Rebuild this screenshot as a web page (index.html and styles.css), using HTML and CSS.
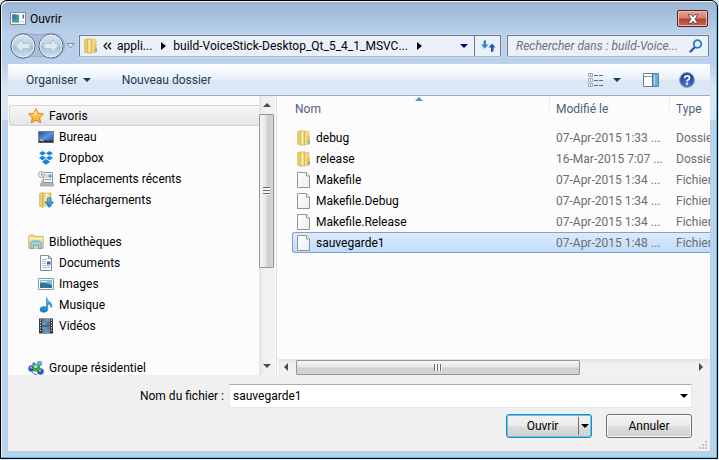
FILE: index.html
```html
<!DOCTYPE html>
<html lang="fr">
<head>
<meta charset="utf-8">
<title>Ouvrir</title>
<link rel="stylesheet" href="styles.css">
</head>
<body>
<svg class="defs" aria-hidden="true">
  <defs>
    <linearGradient id="gFolder" x1="0" x2="1"><stop offset="0" stop-color="#e8cf6e"/><stop offset=".5" stop-color="#fbf0b4"/><stop offset="1" stop-color="#dcb84a"/></linearGradient>
    <linearGradient id="gPage" x1="0" y1="0" x2="1" y2="1"><stop offset="0" stop-color="#fff"/><stop offset="1" stop-color="#ececec"/></linearGradient>
    <linearGradient id="gStar" x1="0" y1="0" x2="0" y2="1"><stop offset="0" stop-color="#ffe27a"/><stop offset="1" stop-color="#f9a51c"/></linearGradient>
    <linearGradient id="gScreen" x1="0" y1="0" x2="1" y2="1"><stop offset="0" stop-color="#1c4fa8"/><stop offset=".5" stop-color="#5c94e0"/><stop offset="1" stop-color="#1d4a9c"/></linearGradient>
    <linearGradient id="gBlue" x1="0" y1="0" x2="0" y2="1"><stop offset="0" stop-color="#5cc4f4"/><stop offset="1" stop-color="#1a78c8"/></linearGradient>
    <linearGradient id="gOrb" x1="0" y1="0" x2="0" y2="1"><stop offset="0" stop-color="#dbe6f2"/><stop offset=".48" stop-color="#bccde0"/><stop offset=".52" stop-color="#a5bad2"/><stop offset="1" stop-color="#d3e4f4"/></linearGradient>
    <radialGradient id="gHelp" cx=".5" cy=".75" r=".7"><stop offset="0" stop-color="#4d82e0"/><stop offset="1" stop-color="#16309a"/></radialGradient>
    <symbol id="folder" viewBox="0 0 16 16"><path d="M1.500 1.500 6 .6V15.500L1.500 14.200Z" fill="#e6cb66" stroke="#d0b24c" stroke-width=".5"/><path d="M6.500 1.500h6.500v13H6.500z" fill="#f0da83" stroke="#d2b44e" stroke-width=".5"/><path d="M4.500 1.800 8.500.5v15l-4-1.200z" fill="url(#gFolder)" stroke="#cdae45" stroke-width=".5"/><path d="M11 6h2.500v8H11z" fill="#e3c35a"/><path d="M12.300 10.500h1.400v3h-1.400z" fill="#49a8e8"/></symbol>
    <symbol id="page" viewBox="0 0 16 16"><path d="M1.500.5h9l3 3.500v11.500h-12z" fill="url(#gPage)" stroke="#949494"/><path d="M10.500.5V4h3" fill="#fff" stroke="#949494"/></symbol>
    <symbol id="star" viewBox="0 0 16 16"><path d="m8 .7 2.200 4.700 5.200.6-3.800 3.600 1 5.200L8 12.200l-4.600 2.600 1-5.200L.6 6l5.200-.6z" fill="url(#gStar)" stroke="#df7f1c"/><path d="m8 2.500 1.200 4H5L8 2.500z" fill="#fff3b5" opacity=".7"/></symbol>
    <symbol id="desk" viewBox="0 0 16 16"><path d="M.5 2.500h15v11H.5z" fill="url(#gScreen)" stroke="#6f7f95"/><path d="M1 11.500h14V13.500H1z" fill="#243145"/><path d="M2 10h2v2H2z" fill="#f3a53a"/><path d="M4 10.500h1.500v2H4z" fill="#7bcb49"/></symbol>
    <symbol id="dropbox" viewBox="0 0 16 16"><path d="M4.500 1 8 3.200 4.500 5.500 1 3.200zM11.500 1 15 3.200 11.500 5.500 8 3.200zM4.500 5.700 8 8l-3.500 2.200L1 8zM11.500 5.700 15 8l-3.500 2.200L8 8zM8 9l3.500 2.200v1.300L8 14.800l-3.500-2.300v-1.300z" fill="#1583e4"/></symbol>
    <symbol id="recent" viewBox="0 0 16 16"><path d="M5.500 1.500h9v10h-9z" fill="#f8fbfd" stroke="#8f99a1"/><path d="M7 4h3M7 6h3" stroke="#b3bdc6"/><path d="M10.500 3.500h3v3h-3z" fill="#4b96d2"/><path d="M7 8.500h6" stroke="#6fa5a1"/><path d="M3 11.500h12l.5 3.500H2z" fill="#b6babd" stroke="#85898c" stroke-width=".6"/><circle cx="3.500" cy="3.500" r="3" fill="#f4f6f7" stroke="#969b9f"/><path d="M3.500 2v2h1.500" fill="none" stroke="#666" stroke-width=".8"/><path d="M3 8.500h2v3H3z" fill="#c9cdd0"/></symbol>
    <symbol id="download" viewBox="0 0 16 16"><path d="M1.500 1.500 5 .5v15l-3.500-1.200z" fill="#e6cd70" stroke="#c9ad4c" stroke-width=".6"/><path d="M5 1h8v13H5z" fill="url(#gFolder)" stroke="#c9aa43" stroke-width=".6"/><path d="M9.500 6h3.500v4h2.500l-4.200 5.500L7 10h2.500z" fill="url(#gBlue)" stroke="#1568ac" stroke-width=".7"/></symbol>
    <symbol id="library" viewBox="0 0 16 16"><path d="M.7 2.500 2 1h4l1 1.500h8.300v11.800H.7z" fill="#f3dc85" stroke="#c9a94a" stroke-width=".8"/><path d="M1 4.500h14" stroke="#fff6cc" stroke-width="1.500"/><path d="M2.700 14.700V10q0-3 3-3h4.600q3 0 3 3v4.700h-2.600v-3.500H5.300v3.500z" fill="#9bd4ee" stroke="#4a9fc9" stroke-width=".8"/></symbol>
    <symbol id="doc" viewBox="0 0 16 16"><path d="M2.500.5h8l3 3v12h-11z" fill="#fff" stroke="#858b93"/><path d="M10.500.5v3h3" fill="none" stroke="#858b93"/><path d="M4 4.500h5M4 6.500h4M4 8.500h4M4 10.500h8M4 12.500h8" stroke="#b5bcd6"/><path d="M9 6.500h3.500v3H9z" fill="#2c66b5"/></symbol>
    <symbol id="image" viewBox="0 0 16 16"><path d="M.5 2.500h15v11H.5z" fill="#fff" stroke="#8d9399"/><path d="M2 4h12v8H2z" fill="#7bc0eb"/><path d="M2 7q5-1 12 2v1H2z" fill="#2f8062"/><path d="M2 9.500h12V12H2z" fill="#2b6fb8"/><path d="M3 5.500h6" stroke="#e5f5fe"/></symbol>
    <symbol id="music" viewBox="0 0 16 16"><path d="M8.500.7q.5 2.300 3 4 3.500 2.300 1.700 6-.3-3.200-3.500-4v5.600q0 3-4 3-3.700 0-3.700-2.700 0-2.800 3.700-3 1.500 0 2.800.5z" fill="url(#gBlue)" stroke="#2681bd" stroke-width=".7"/></symbol>
    <symbol id="video" viewBox="0 0 16 16"><path d="M1 .5h14v15H1z" fill="#303740"/><path d="M4 1h8v6.500H4zM4 8.500h8V15H4z" fill="#4a9bd6"/><path d="M4 1h4l-4 4zM9 3l3 1v3H8zM4 10l3 3-3 2zM8 9l4 1-2 3z" fill="#a85b49"/><path d="M2.500 1.500v13M13.500 1.500v13" stroke="#d9e8e6" stroke-width="1.200" stroke-dasharray="1.200 1.400"/></symbol>
    <symbol id="group" viewBox="0 0 16 16"><circle cx="11.500" cy="3.500" r="2.800" fill="#6ba9e4"/><circle cx="3.500" cy="8.500" r="3.200" fill="#3158c4"/><circle cx="12.500" cy="11.500" r="3.300" fill="#3459be"/><circle cx="6" cy="4" r="1.800" fill="#4a80d2"/><circle cx="8.500" cy="8" r="3.800" fill="#3aa63c"/><circle cx="7.700" cy="6.500" r="1.600" fill="#b8ecb0"/><circle cx="2.800" cy="7.500" r="1" fill="#a9c4f5"/><circle cx="12" cy="10.500" r="1" fill="#b4c9f4"/><path d="M4 12q2 3 5 2.500" stroke="#4c6cb8" fill="none"/></symbol>
  </defs>
</svg>

<main class="window">
  <header class="titlebar">
    <svg class="app" viewBox="0 0 16 14" aria-hidden="true"><path d="M.5.5h15v12H.5z" fill="#f7f9fa" stroke="#7f8a94"/><path d="M2 2.500h7v8H2z" fill="#459a91"/><path d="M2 2.500h4v5H2z" fill="#4979ae"/><path d="M10 9.500h1.500M12.500 9.500H14" stroke="#b7c2c9"/><path d="M12.500 2.500h1.500v4h-1.500z" fill="#3978b8"/></svg>
    <h1>Ouvrir</h1>
    <button class="close" aria-label="Fermer"><svg viewBox="0 0 12 10"><path d="M1 .7h3.200L6 2.800 7.800.7H11L8 5l3 4.300H7.800L6 7.200 4.200 9.300H1L4 5z" fill="#fff" stroke="#5b4a55"/></svg></button>
  </header>

  <nav class="navbar" aria-label="Adresse">
    <div class="history">
      <svg class="orbs" viewBox="0 0 57 28" aria-hidden="true"><path d="M14 1.500Q28.500 4 43 1.500a12.500 12.500 0 0 1 0 25Q28.500 22 14 26.500a12.500 12.500 0 0 1 0-25z" fill="#a9bfd9" stroke="#94abc7"/></svg>
      <button aria-label="Précédent"><svg viewBox="0 0 26 26"><circle cx="13" cy="13" r="12" fill="url(#gOrb)" stroke="#596b82"/><circle cx="13" cy="13" r="11" fill="none" stroke="#e7f0f8"/><path d="m5.500 13 7-6.500v4H20v5h-7.500v4z" fill="#dfeaf5" stroke="#b5c8dc"/></svg></button>
      <button aria-label="Suivant"><svg viewBox="0 0 26 26"><circle cx="13" cy="13" r="12" fill="url(#gOrb)" stroke="#596b82"/><circle cx="13" cy="13" r="11" fill="none" stroke="#e7f0f8"/><path d="m20.500 13-7-6.500v4H6v5h7.500v4z" fill="#dfeaf5" stroke="#b5c8dc"/></svg></button>
      <button aria-label="Pages récentes"><svg class="recentpages" viewBox="0 0 9 6"><path d="M.8.5h7.400L4.500 5z" fill="#dce8f4" stroke="#7e94ad"/></svg></button>
    </div>
    <div class="address">
      <svg class="icon" aria-hidden="true"><use href="#folder"/></svg>
      <button class="more" aria-label="Dossiers parents"><svg viewBox="0 0 9 8"><path d="M4 .8 1 4l3 3.200M8 .8 5 4l3 3.200" fill="none" stroke="#111" stroke-width="1.300"/></svg></button>
      <button>appli...</button>
      <svg class="arrow-r" viewBox="0 0 5 8" aria-hidden="true"><path d="m0 0 5 4-5 4z"/></svg>
      <button>build-VoiceStick-Desktop_Qt_5_4_1_MSVC...</button>
      <svg class="arrow-r" viewBox="0 0 5 8" aria-hidden="true"><path d="m0 0 5 4-5 4z"/></svg>
      <button class="drop" aria-label="Emplacements précédents"><svg class="arrow-d navy" viewBox="0 0 8 4"><path d="M0 0h8L4 4z"/></svg></button>
      <button class="refresh" aria-label="Actualiser"><svg viewBox="0 0 16 14"><path d="M6 .8 3.500 2v3.500H1l3.800 4.300L8.500 5.500H6z" fill="#3688ca"/><path d="M11 13.500 13.500 12V8.500H15.500L12 4.500 8.500 8.500H11z" fill="#24589f"/></svg></button>
    </div>
    <div class="search">
      <input type="text" aria-label="Rechercher" placeholder="Rechercher dans : build-Voice...">
      <svg viewBox="0 0 14 14" aria-hidden="true"><path d="M6 8 1.500 12.500" stroke="#2e5c9c" stroke-width="2.400" stroke-linecap="round"/><circle cx="8.500" cy="5" r="3.800" fill="#e7f3fc" stroke="#2c74be" stroke-width="1.800"/></svg>
    </div>
  </nav>

  <div class="toolbar">
    <button class="tool">Organiser <svg class="arrow-d" viewBox="0 0 8 4"><path d="M0 0h8L4 4z"/></svg></button>
    <button class="tool">Nouveau dossier</button>
    <button class="view" aria-label="Affichage"><svg viewBox="0 0 16 14"><path d="M.5.500h4v3h-4zM.5 5.500h4v3h-4zM.5 10.500h4v3h-4z" fill="#fff" stroke="#8c98a8" stroke-width=".8"/><path d="M2 1.500h1v1H2zM2 11.500h1v1H2z" fill="#2b58a8"/><path d="M2 6.500h1v1H2z" fill="#d33c2c"/><path d="M6 2.500h4M11 2.500h4M6 7.500h4M11 7.500h4M6 12.500h4M11 12.500h4" stroke="#5c6d85"/></svg></button>
    <button class="viewdrop" aria-label="Autres options"><svg class="arrow-d" viewBox="0 0 8 4"><path d="M0 0h8L4 4z"/></svg></button>
    <button class="preview" aria-label="Volet de visualisation"><svg viewBox="0 0 16 14"><path d="M.5.5h15v13H.5z" fill="#fff" stroke="#6b7f99"/><path d="M1 3.500h9" stroke="#8496ae"/><path d="M10 1h5v12h-5z" fill="#5cb4d6"/><path d="M9.500 1v12" stroke="#4a6c8c"/><path d="M11.500 2v10" stroke="#c2e8f4"/></svg></button>
    <button class="help" aria-label="Aide"><svg viewBox="0 0 16 16"><circle cx="8" cy="8" r="7.300" fill="url(#gHelp)" stroke="#8993a8" stroke-width="1.200"/><path d="M5.600 6.200Q5.700 3.800 8.100 3.800q2.400 0 2.400 2Q10.500 7 9.200 7.700 8.100 8.400 8.100 9.500" fill="none" stroke="#fff" stroke-width="1.700"/><circle cx="8.100" cy="11.800" r="1.100" fill="#fff"/></svg></button>
  </div>

  <section class="content">
    <div class="tree">
      <ul>
        <li class="root selected"><a href="#"><svg class="icon"><use href="#star"/></svg>Favoris</a></li>
        <li><a href="#"><svg class="icon"><use href="#desk"/></svg>Bureau</a></li>
        <li><a href="#"><svg class="icon"><use href="#dropbox"/></svg>Dropbox</a></li>
        <li><a href="#"><svg class="icon"><use href="#recent"/></svg>Emplacements récents</a></li>
        <li><a href="#"><svg class="icon"><use href="#download"/></svg>Téléchargements</a></li>
      </ul>
      <ul>
        <li class="root"><a href="#"><svg class="icon"><use href="#library"/></svg>Bibliothèques</a></li>
        <li><a href="#"><svg class="icon"><use href="#doc"/></svg>Documents</a></li>
        <li><a href="#"><svg class="icon"><use href="#image"/></svg>Images</a></li>
        <li><a href="#"><svg class="icon"><use href="#music"/></svg>Musique</a></li>
        <li><a href="#"><svg class="icon"><use href="#video"/></svg>Vidéos</a></li>
      </ul>
      <ul>
        <li class="root"><a href="#"><svg class="icon"><use href="#group"/></svg>Groupe résidentiel</a></li>
      </ul>
    </div>
    <div class="vscroll" aria-hidden="true">
      <svg class="tip" viewBox="0 0 8 4"><path d="M0 4h8L4 0z"/></svg>
      <div class="vtrack"><div class="vthumb"><i></i></div></div>
      <svg class="tip" viewBox="0 0 8 4"><path d="M0 0h8L4 4z"/></svg>
    </div>
    <div class="files">
      <div class="listing">
        <table>
          <colgroup><col class="c-name"><col class="c-date"><col class="c-type"></colgroup>
          <thead><tr><th>Nom<svg class="sort" viewBox="0 0 8 4" aria-hidden="true"><path d="M0 4h8L4 0z"/></svg></th><th>Modifié le</th><th>Type</th></tr></thead>
          <tbody>
            <tr><td><svg class="icon"><use href="#folder"/></svg>debug</td><td>07-Apr-2015 1:33 ...</td><td>Dossier</td></tr>
            <tr><td><svg class="icon"><use href="#folder"/></svg>release</td><td>16-Mar-2015 7:07 ...</td><td>Dossier</td></tr>
            <tr><td><svg class="icon"><use href="#page"/></svg>Makefile</td><td>07-Apr-2015 1:34 ...</td><td>Fichier</td></tr>
            <tr><td><svg class="icon"><use href="#page"/></svg>Makefile.Debug</td><td>07-Apr-2015 1:34 ...</td><td>Fichier</td></tr>
            <tr><td><svg class="icon"><use href="#page"/></svg>Makefile.Release</td><td>07-Apr-2015 1:34 ...</td><td>Fichier</td></tr>
            <tr class="active"><td><svg class="icon"><use href="#page"/></svg>sauvegarde1</td><td>07-Apr-2015 1:48 ...</td><td>Fichier</td></tr>
          </tbody>
        </table>
      </div>
      <div class="hscroll" aria-hidden="true">
        <svg class="side" viewBox="0 0 4 8"><path d="M4 0v8L0 4z"/></svg>
        <div class="htrack"><div class="hthumb"><i></i></div></div>
        <svg class="side" viewBox="0 0 4 8"><path d="M0 0v8l4-4z"/></svg>
      </div>
    </div>
  </section>

  <footer class="footer">
    <div class="filename">
      <label for="file">Nom du fichier :</label>
      <div class="combo">
        <input id="file" type="text" value="sauvegarde1">
        <button aria-label="Fichiers récents"><svg class="arrow-d" viewBox="0 0 8 4"><path d="M0 0h8L4 4z"/></svg></button>
      </div>
    </div>
    <div class="actions">
      <div class="split">
        <button>Ouvrir</button>
        <button class="splitdrop" aria-label="Options d'ouverture"><svg class="arrow-d" viewBox="0 0 8 4"><path d="M0 0h8L4 4z"/></svg></button>
      </div>
      <button class="cancel">Annuler</button>
    </div>
    <svg class="grip" viewBox="0 0 8 8" aria-hidden="true"><path d="M6 0h2v2H6zM3 3h2v2H3zM6 3h2v2H6zM0 6h2v2H0zM3 6h2v2H3zM6 6h2v2H6z" fill="#c2c2c2"/></svg>
  </footer>
</main>
</body>
</html>
```
FILE: styles.css
```css
* { box-sizing: border-box; }

body {
  margin: 0;
  height: 100vh;
  padding: 0 1px 1px 0;
  background: #dfe6ef;
  font: 12px/16px Roboto, "Open Sans", sans-serif;
  color: #000;
}

button, input { font: inherit; color: inherit; }
button { margin: 0; padding: 0; border: 0; background: none; white-space: nowrap; }
svg { display: block; flex: none; }
ul { margin: 0; padding: 0; list-style: none; }
.defs { position: absolute; width: 0; height: 0; }
.icon { width: 16px; height: 16px; }
.arrow-d { width: 8px; height: 4px; fill: currentColor; }
.arrow-r { width: 5px; height: 8px; }

.window {
  display: flex;
  flex-direction: column;
  height: 100%;
  padding: 0 7px 7px;
  border: 1px solid #000;
  border-radius: 7px 7px 0 0;
  background: linear-gradient(#9ab4d2, #b9d1ea 32px, #b9cfea 60px, #dce8f5 90px, #d6e4f3 119px, #b9d1ea 119px);
  box-shadow: inset -1px -1px #35cbe8, inset 1px 1px #eef5fb;
}

/* Title bar */
.titlebar {
  display: flex;
  align-items: center;
  height: 31px;
  padding: 4px 2px 0;
  flex: none;
}
.app { width: 16px; height: 14px; }
.titlebar h1 { margin: 0 auto 0 4px; font: inherit; }
.close {
  display: grid;
  place-items: center;
  width: 31px;
  height: 17px;
  border: 1px solid #57202a;
  border-radius: 2px;
  background: linear-gradient(#e6a498, #d8806e 48%, #b93b26 52%, #cb6a52);
  box-shadow: inset 0 0 0 1px #ecbcae;
}
.close svg { width: 12px; height: 10px; }

/* Address row */
.navbar {
  display: flex;
  align-items: center;
  gap: 6px;
  height: 32px;
  margin: 0 -7px;
  padding: 0 8px 4px 9px;
  flex: none;
  background: #b9cfea;
  background-clip: content-box;
}
.history { position: relative; display: flex; align-items: center; gap: 2px; width: 63px; }
.history button { position: relative; }
.history button svg { width: 26px; height: 26px; }
.history .orbs { position: absolute; left: -1px; width: 57px; height: 28px; }
.history button .recentpages { width: 9px; height: 6px; }

.address, .search {
  display: flex;
  align-items: center;
  height: 22px;
  border: 1px solid #6a7789;
  border-bottom-color: #a9b6c6;
  background: #ebf1f9;
  box-shadow: 0 0 0 1px #c9dbee;
}
.address { flex: 1; padding-left: 3px; min-width: 0; }
.address .more { margin: 0 5px 0 4px; }
.more svg { width: 9px; height: 8px; }
.address .arrow-r { margin: 0 7px 0 9px; }
.address .drop { margin-left: auto; width: 20px; height: 20px; display: grid; place-items: center; }
.navy { fill: #00006a; }
.refresh {
  display: grid;
  place-items: center;
  width: 26px;
  height: 20px;
  border-left: 1px solid #6a7789;
}
.refresh svg { width: 16px; height: 14px; }
.search { flex: 0 0 202px; padding: 0 5px 0 8px; }
.search input {
  flex: 1;
  min-width: 0;
  padding: 0;
  border: 0;
  outline: 0;
  background: none;
}
.search input::placeholder { color: #6d7178; opacity: 1; font-style: italic; }
.search svg { width: 14px; height: 14px; }

/* Command bar */
.toolbar {
  display: flex;
  align-items: center;
  flex: none;
  height: 32px;
  padding: 0 15px 0 18px;
  border-bottom: 1px solid #9cabc4;
  background: linear-gradient(#fcfeff, #eaf3fb 48%, #dce6f4 52%, #dde8f6);
  color: #1e395b;
}
.tool { display: flex; align-items: center; gap: 5px; margin-right: 31px; }
.view { margin-left: auto; }
.view svg, .preview svg { width: 16px; height: 14px; }
.viewdrop { margin: 0 22px 0 9px; }
.preview { margin-right: 20px; }
.help svg { width: 16px; height: 16px; }

/* Panes */
.content {
  display: flex;
  flex: 1;
  min-height: 0;
  background: #fcfcfc;
}
.tree { flex: 0 0 251px; padding: 9px 0 0 1px; overflow: hidden; }
.tree ul { margin-bottom: 21px; }
.tree a {
  display: flex;
  align-items: center;
  gap: 5px;
  height: 21px;
  padding-left: 29px;
  color: #000;
  text-decoration: none;
}
.tree .root a { padding-left: 19px; }
.tree .selected a {
  padding-left: 18px;
  border: 1px solid #d5d5d5;
  border-right: 0;
  border-radius: 3px 0 0 3px;
  background: linear-gradient(#f8f8f8, #e5e5e5);
}
.vscroll {
  display: flex;
  flex-direction: column;
  align-items: center;
  flex: 0 0 16px;
  padding: 7px 0;
  background: linear-gradient(90deg, #e3e3e3, #f0f0f0 30%, #f2f2f2);
}
.tip { width: 8px; height: 4px; fill: #4a4a4a; }
.vtrack { flex: 1; width: 100%; padding-top: 7px; }
.vthumb, .hthumb {
  display: grid;
  place-items: center;
  border: 1px solid #959595;
  border-radius: 1px;
}
.vthumb { height: 154px; width: 15px; background: linear-gradient(90deg, #f5f5f5, #e6e6e6 48%, #cfcfd1 52%, #d5d5d8); }
.vthumb i { width: 7px; height: 8px; background: repeating-linear-gradient(#6d6d6d 0 1px, #f5f5f5 1px 3px); }
.files {
  display: flex;
  flex-direction: column;
  flex: 1;
  min-width: 0;
  margin-left: 1px;
  padding-left: 1px;
  border-left: 1px solid #d3e2f2;
}
.listing { flex: 1; overflow: hidden; }
table { width: 480px; table-layout: fixed; border-spacing: 0; }
.c-name { width: 272px; }
.c-date { width: 120px; }
th {
  position: relative;
  height: 26px;
  padding: 0 0 0 6px;
  text-align: left;
  font-weight: normal;
  color: #4c607a;
  background: linear-gradient(#dbe7f3, #fcfcfc) right / 1px 100% no-repeat;
}
th:first-child { padding-left: 17px; }
.sort { position: absolute; top: 1px; left: 137px; width: 8px; height: 4px; fill: #5f8fae; }
thead::after { content: ""; display: block; height: 5px; }
td { height: 21px; padding: 0 0 0 6px; color: #6d6d6d; white-space: nowrap; }
td:first-child { display: flex; align-items: center; gap: 4px; padding-left: 18px; color: #000; }
.active td {
  border: solid #7da2ce;
  border-width: 1px 0;
  background: linear-gradient(#dcebfc, #c1dbfc);
}
.active td:first-child {
  margin-left: 14px;
  padding-left: 3px;
  border-left-width: 1px;
  border-radius: 3px 0 0 3px;
}
.hscroll {
  display: flex;
  align-items: center;
  height: 16px;
  padding: 0 7px 0 6px;
  background: linear-gradient(#e3e3e3, #f0f0f0 30%, #f2f2f2);
}
.side { width: 4px; height: 8px; fill: #4a4a4a; }
.htrack { flex: 1; padding: 0 8px; }
.hthumb { width: 72%; height: 15px; background: linear-gradient(#f5f5f5, #e6e6e6 48%, #cfcfd1 52%, #d5d5d8); }
.hthumb i { width: 8px; height: 7px; background: repeating-linear-gradient(90deg, #6d6d6d 0 1px, #f5f5f5 1px 3px); }

/* File name and actions */
.footer {
  position: relative;
  flex: none;
  padding: 9px 18px 13px 20px;
  background: #f0f0f0;
}
.filename { display: flex; align-items: center; }
.filename label { flex: 0 0 196px; text-align: right; }
.combo {
  display: flex;
  align-items: center;
  flex: 1;
  height: 24px;
  margin-left: 5px;
  padding: 0 3px;
  border: 1px solid #e2e8ef;
  border-top-color: #abadb3;
  background: #fff;
}
.combo input { flex: 1; min-width: 0; padding: 0; border: 0; outline: 0; background: none; }
.actions { display: flex; justify-content: flex-end; gap: 14px; margin-top: 6px; }
.split, .cancel {
  width: 86px;
  height: 24px;
  border: 1px solid #707070;
  border-radius: 3px;
  background: linear-gradient(#f3f3f3, #ebebeb 48%, #dddddd 52%, #cfcfcf);
  box-shadow: inset 0 0 0 1px #fafafa;
}
.split { display: flex; border-color: #3c7fb1; box-shadow: inset 0 0 0 1px #48d0f5; }
.split button { flex: 1; }
.split .splitdrop {
  display: grid;
  place-items: center;
  flex: 0 0 13px;
  margin: 2px 0;
  border-left: 1px solid #707070;
}
.grip { position: absolute; right: 3px; bottom: 2px; width: 8px; height: 8px; }
```
